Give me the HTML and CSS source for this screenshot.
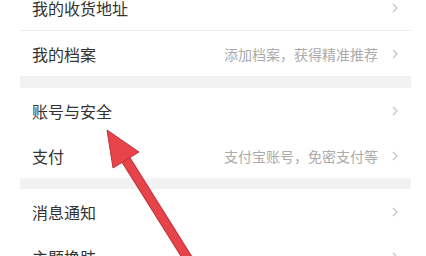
FILE: index.html
```html
<!DOCTYPE html>
<html lang="zh-CN">
<head>
<meta charset="utf-8">
<link rel="stylesheet" href="styles.css">
</head>
<body>
<div class="screen">
  <div class="list">
    <div class="row row-first"><span class="label">我的收货地址</span><span class="right"><svg class="chev" viewBox="0 0 6 10"><polyline points="1,1 5,5 1,9"/></svg></span></div>
    <div class="row"><span class="label">我的档案</span><span class="right"><span class="hint">添加档案，获得精准推荐</span><svg class="chev" viewBox="0 0 6 10"><polyline points="1,1 5,5 1,9"/></svg></span></div>
    <div class="band"></div>
    <div class="row"><span class="label">账号与安全</span><span class="right"><svg class="chev" viewBox="0 0 6 10"><polyline points="1,1 5,5 1,9"/></svg></span></div>
    <div class="row"><span class="label">支付</span><span class="right"><span class="hint">支付宝账号，免密支付等</span><svg class="chev" viewBox="0 0 6 10"><polyline points="1,1 5,5 1,9"/></svg></span></div>
    <div class="band band-2"></div>
    <div class="row"><span class="label">消息通知</span><span class="right"><svg class="chev" viewBox="0 0 6 10"><polyline points="1,1 5,5 1,9"/></svg></span></div>
    <div class="row"><span class="label">主题换肤</span><span class="right"><svg class="chev" viewBox="0 0 6 10"><polyline points="1,1 5,5 1,9"/></svg></span></div>
  </div>
  <svg class="arrow" viewBox="0 0 426 256" width="426" height="256">
    <line class="shaft-edge" x1="121" y1="152" x2="205" y2="286"/>
    <line class="shaft" x1="121" y1="152" x2="205" y2="286"/>
    <polygon class="head" points="107,130 139,152 113,168"/>
  </svg>
</div>
</body>
</html>
```

FILE: styles.css
```css
html, body {
  margin: 0;
  padding: 0;
  background: #ffffff;
}
.screen {
  position: relative;
  width: 426px;
  height: 256px;
  overflow: hidden;
  background: #ffffff;
  font-family: "Noto Sans CJK SC", "Noto Sans", sans-serif;
}
.list {
  margin: -14px 15px 0 20px;
  display: flex;
  flex-direction: column;
}
.row {
  height: 45px;
  box-sizing: border-box;
  display: flex;
  align-items: center;
  justify-content: space-between;
  padding: 0 13px 0 12px;
}
.row-first {
  border-bottom: 1px solid #ececec;
}
.label {
  font-size: 16px;
  color: #333333;
}
.right {
  display: flex;
  align-items: center;
  gap: 14px;
}
.hint {
  font-size: 14px;
  color: #ababab;
}
.chev {
  width: 6px;
  height: 10px;
  fill: none;
  stroke: #c6c6c6;
  stroke-width: 1.3;
}
.band {
  height: 12px;
  background: #f2f2f2;
}
.band-2 {
  height: 11px;
}
.arrow {
  position: absolute;
  left: 0;
  top: 0;
}
.shaft-edge {
  stroke: #c4333a;
  stroke-width: 10;
}
.shaft {
  stroke: #e6434a;
  stroke-width: 8;
}
.head {
  fill: #e6434a;
  stroke: #c4333a;
  stroke-width: 1;
  stroke-linejoin: miter;
}
```
